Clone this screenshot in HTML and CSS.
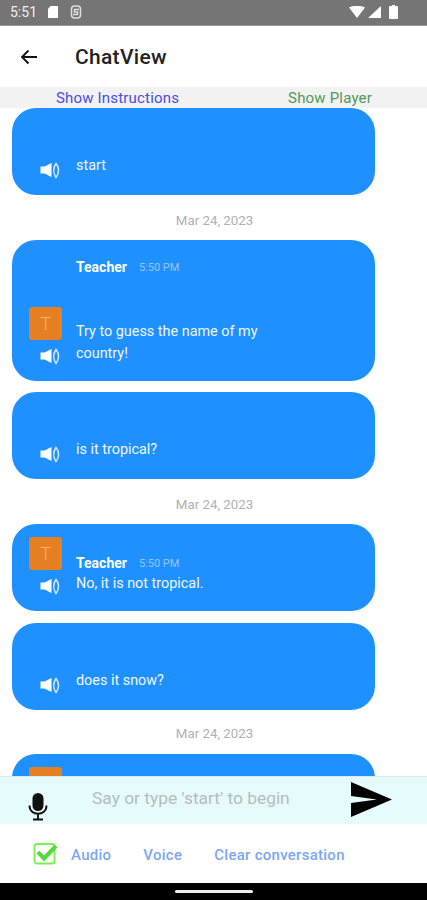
FILE: index.html
```html
<!DOCTYPE html>
<html lang="en">
<head>
  <meta charset="UTF-8">
  <meta name="viewport" content="width=device-width, initial-scale=1.0">
  <title>ChatView</title>
  <link rel="stylesheet" href="styles.css">
</head>
<body>
  <svg width="0" height="0" class="defs">
    <symbol id="speaker" viewBox="0 0 22 22">
      <path d="M0.500 7.500h4L11.500 4v14L4.500 14.500h-4z" fill="#fff"/>
      <path d="M16 4.500c-2.800 4.200-2.800 9.800 0 14c3.400-4.200 3.400-9.800 0-14z" fill="none" stroke="#d5e9ff" stroke-width="1.500"/>
    </symbol>
  </svg>

  <div class="status-bar">
    <span class="time">5:51</span>
    <svg class="status-icon" width="12" height="14" viewBox="0 0 12 14"><path d="M3.500 1H11v12H1V4z" fill="#fff"/></svg>
    <svg class="status-icon s-icon" width="12" height="14" viewBox="0 0 12 14"><rect x="1.500" y="1" width="9" height="12" rx="3" fill="none" stroke="#ddd" stroke-width="1.500"/><path d="M9 4.500H4.500v2.500h3v2.500H3" fill="none" stroke="#ddd" stroke-width="1.500"/></svg>
    <span class="spacer"></span>
    <svg width="16" height="12" viewBox="0 0 16 12"><path d="M0 1.500Q8 -2 16 1.500L8 12z" fill="#fff"/></svg>
    <svg class="signal" width="13" height="12" viewBox="0 0 13 12"><path d="M13 0v12H0z" fill="#fff"/></svg>
    <svg class="battery" width="9" height="14" viewBox="0 0 9 14"><path d="M3 0h3v1h2q1 0 1 1v11q0 1-1 1H1q-1 0-1-1V2q0-1 1-1h2z" fill="#fff"/></svg>
  </div>

  <header class="app-bar">
    <svg class="back" width="20" height="20" viewBox="0 0 20 20"><path d="M18 10H3M9.500 3.500L3 10l6.500 6.500" fill="none" stroke="#111" stroke-width="1.800"/></svg>
    <h1>ChatView</h1>
  </header>

  <div class="tabs">
    <a class="tab-instructions">Show Instructions</a>
    <a class="tab-player">Show Player</a>
  </div>

  <main class="messages">
    <div class="bubble user">
      <div class="side"><svg class="speaker"><use href="#speaker"/></svg></div>
      <div class="body"><p>start</p></div>
    </div>

    <div class="date">Mar 24, 2023</div>

    <div class="bubble long">
      <div class="side">
        <div class="avatar">T</div>
        <svg class="speaker"><use href="#speaker"/></svg>
      </div>
      <div class="body">
        <div class="head tall"><strong>Teacher</strong><span>5:50 PM</span></div>
        <p>Try to guess the name of my<br>country!</p>
      </div>
    </div>

    <div class="bubble user">
      <div class="side"><svg class="speaker"><use href="#speaker"/></svg></div>
      <div class="body"><p>is it tropical?</p></div>
    </div>

    <div class="date">Mar 24, 2023</div>

    <div class="bubble">
      <div class="side">
        <div class="avatar">T</div>
        <svg class="speaker"><use href="#speaker"/></svg>
      </div>
      <div class="body">
        <div class="head"><strong>Teacher</strong><span>5:50 PM</span></div>
        <p>No, it is not tropical.</p>
      </div>
    </div>

    <div class="bubble user">
      <div class="side"><svg class="speaker"><use href="#speaker"/></svg></div>
      <div class="body"><p>does it snow?</p></div>
    </div>

    <div class="date last">Mar 24, 2023</div>

    <div class="bubble">
      <div class="side">
        <div class="avatar"></div>
        <svg class="speaker"><use href="#speaker"/></svg>
      </div>
    </div>
  </main>

  <div class="composer">
    <svg class="mic" width="20" height="28" viewBox="0 0 20 28">
      <rect x="4.500" y="0" width="11" height="18" rx="5.500" fill="#111"/>
      <path d="M1.500 12.500c0 11 17 11 17 0M10 21v5M5 26.500h10" fill="none" stroke="#111" stroke-width="1.900"/>
    </svg>
    <input type="text" placeholder="Say or type 'start' to begin">
    <svg class="send" width="41" height="35" viewBox="0 0 41 35"><path d="M0 0L41 17.500L0 35V21L26 17.500L0 14z" fill="#000"/></svg>
  </div>

  <div class="options">
    <svg class="check" width="25" height="23" viewBox="0 0 25 23">
      <rect x="1.500" y="2" width="20" height="19.500" rx="2.500" fill="none" stroke="#78f04e" stroke-width="1.800"/>
      <path d="M5 10l6 6.500L23 4" fill="none" stroke="#55d93a" stroke-width="4"/>
    </svg>
    <a class="audio">Audio</a>
    <a class="voice">Voice</a>
    <a class="clear">Clear conversation</a>
  </div>

  <div class="nav-bar"><span class="pill"></span></div>
</body>
</html>
```

FILE: styles.css
```css
* {
  box-sizing: border-box;
}
body {
  margin: 0;
  height: 900px;
  display: flex;
  flex-direction: column;
  overflow: hidden;
  background-color: #fff;
  font-family: Roboto, "Liberation Sans", sans-serif;
}
.defs {
  position: absolute;
}
.status-bar {
  height: 26px;
  flex: none;
  display: flex;
  align-items: center;
  padding: 0 10px 2px;
  background-color: #757575;
  border-bottom: 1px solid #999;
  color: #eee;
  font-size: 14px;
}
.status-icon {
  margin-left: 10px;
}
.s-icon {
  margin-left: 11px;
}
.spacer {
  flex: 1;
}
.signal {
  margin-left: 3px;
}
.battery {
  margin: 0 19px 0 8px;
}
.app-bar {
  height: 61px;
  flex: none;
  display: flex;
  align-items: center;
  padding-left: 19px;
}
.back {
  margin-right: 36px;
}
.app-bar h1 {
  margin: 0;
  font-size: 21px;
  font-weight: 500;
  letter-spacing: 0.3px;
  color: #222;
}
.tabs {
  height: 21px;
  flex: none;
  display: flex;
  justify-content: space-between;
  align-items: center;
  padding: 0 55px 0 56px;
  background-color: #f2f2f2;
  font-size: 15px;
  letter-spacing: 0.18px;
}
.tab-instructions {
  color: #4b4bea;
}
.tab-player {
  color: #4f9a58;
}
.messages {
  flex: 1;
  min-height: 0;
  overflow: hidden;
  display: flex;
  flex-direction: column;
  padding: 0 52px 0 12px;
}
.bubble {
  flex: none;
  min-height: 87px;
  display: flex;
  align-items: flex-end;
  margin-bottom: 12px;
  padding: 0 20px 16px 17px;
  border-radius: 24px;
  background-color: #1e90ff;
  color: #f2f7ff;
}
.bubble.long {
  margin-bottom: 11px;
}
.bubble.user {
  padding-bottom: 18px;
}
.side {
  width: 47px;
  flex: none;
  margin-bottom: -2px;
}
.user .side {
  margin-bottom: -4px;
}
.avatar {
  width: 33px;
  height: 33px;
  margin-bottom: 5px;
  border-radius: 3px;
  background-color: #e67e22;
  color: #f5b878;
  font-size: 18px;
  font-weight: 300;
  line-height: 33px;
  text-align: center;
}
.speaker {
  display: block;
  width: 22px;
  height: 22px;
  margin-left: 11px;
}
.body p {
  margin: 0;
  font-size: 14.400px;
  line-height: 22px;
}
.head {
  height: 18px;
  display: flex;
  align-items: center;
  gap: 12px;
  margin-bottom: 1px;
}
.head.tall {
  margin-top: 18px;
  margin-bottom: 45px;
}
.head strong {
  font-size: 14px;
  font-weight: 700;
  color: #fff;
}
.head span {
  font-size: 11px;
  color: #9cc4ee;
}
.date {
  height: 33px;
  flex: none;
  margin-right: -42px;
  padding-top: 6px;
  font-size: 13.300px;
  line-height: 16px;
  text-align: center;
  color: #b0b0b0;
}
.date.last {
  height: 32px;
  padding-top: 4px;
}
.composer {
  height: 48px;
  flex: none;
  display: flex;
  align-items: flex-start;
  background-color: #e6fbfb;
  border-top: 1px solid #d5eeee;
}
.mic {
  margin: 16px 0 0 28px;
}
.composer input {
  width: 259px;
  height: 42px;
  margin-left: 44px;
  padding: 0;
  border: none;
  outline: none;
  background: transparent;
  font-family: inherit;
  font-size: 17.400px;
}
.composer input::placeholder {
  color: #b5bdbd;
  opacity: 1;
}
.send {
  margin-top: 5px;
}
.options {
  height: 59px;
  flex: none;
  display: flex;
  align-items: center;
  padding-left: 33px;
  font-size: 15px;
  font-weight: 500;
  letter-spacing: 0.27px;
  color: #7da6f5;
}
.options a {
  margin-top: 2px;
}
.audio {
  margin-left: 13px;
}
.voice {
  margin-left: 32px;
}
.clear {
  margin-left: 32px;
}
.nav-bar {
  height: 17px;
  flex: none;
  display: flex;
  justify-content: center;
  align-items: center;
  background-color: #000;
}
.pill {
  width: 78px;
  height: 3px;
  border-radius: 2px;
  background-color: #eee;
}
```
